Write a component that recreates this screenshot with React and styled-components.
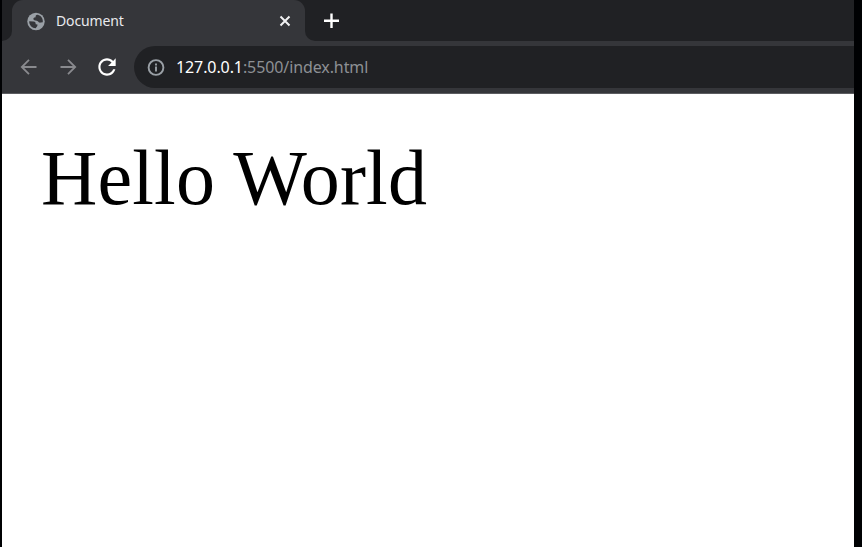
import React from "react";
import styled, { createGlobalStyle } from "styled-components";

const GlobalStyle = createGlobalStyle`
  * { box-sizing: border-box; }
  body { margin: 0; background: #000; overflow: hidden; }
`;

const Screen = styled.div`
  height: 547px;
  padding: 0 8px 0 2px;
  background: #000103;
`;

const BrowserWindow = styled.div`
  height: 100%;
  display: flex;
  flex-direction: column;
  background: #fff;
  font-family: "Open Sans", "Noto Sans", sans-serif;
`;

const TabStrip = styled.div`
  height: 42px;
  flex: none;
  display: flex;
  background: #35363a;
`;

const StripStart = styled.div`
  width: 10px;
  height: 41px;
  background: #202124;
  border-bottom-right-radius: 10px;
`;

const TabSlot = styled.div`
  width: 293px;
  background: linear-gradient(#202124 20px, #35363a 20px);
`;

const Tab = styled.div`
  height: 42px;
  display: flex;
  align-items: center;
  padding: 0 13px 1px 14px;
  background: #35363a;
  border-radius: 11px 11px 0 0;
`;

const TabTitle = styled.span`
  flex: 1;
  margin-left: 10px;
  color: #e9eaed;
  font-family: "Noto Sans", sans-serif;
  font-size: 14px;
  line-height: 20px;
  letter-spacing: -0.14px;
`;

const StripRest = styled.div`
  flex: 1;
  height: 41px;
  padding: 13px 0 0 18px;
  background: #202124;
  border-bottom-left-radius: 10px;
`;

const Toolbar = styled.div`
  height: 52px;
  flex: none;
  display: flex;
  align-items: flex-start;
  padding-top: 4px;
  background: #35363a;
  border-bottom: 1px solid #5b5c60;
`;

const NavButtons = styled.div`
  width: 132px;
  height: 42px;
  display: flex;
  align-items: center;
  gap: 19px;
  padding-left: 17px;
`;

const AddressBar = styled.div`
  flex: 1;
  height: 42px;
  display: flex;
  align-items: center;
  gap: 10px;
  padding-left: 12px;
  background: #202124;
  border-radius: 21px 0 0 21px;
`;

const Url = styled.span`
  color: #8d9094;
  font-family: "Noto Sans", sans-serif;
  font-size: 16px;
  line-height: 22px;
  letter-spacing: -0.1px;
`;

const Host = styled.span`
  color: #fff;
`;

const Icon = styled.svg`
  display: block;
  flex: none;
  fill: none;
  stroke: ${(p) => p.$color};
  stroke-width: ${(p) => p.$weight || 2};
`;

const ReloadGlyph = styled(Icon)`
  margin-left: -3px;
`;

const Page = styled.main`
  flex: 1;
  padding: 39px 0 0 39px;
`;

const Heading = styled.h1`
  margin: 0;
  color: #000;
  font: 400 78px/90px "Liberation Serif", "Times New Roman", serif;
  letter-spacing: 0.15px;
`;

const GlobeIcon = () => (
  <Icon width="20" height="20" viewBox="0 0 20 20" $color="none">
    <circle cx="10" cy="10.500" r="8.700" fill="#9aa0a6" />
    <path
      fill="#35363a"
      d="M11.600 3.800C9.500 4 9.300 5.500 9.800 6.300C8 6.100 7 7.300 7.500 8.500C8.300 9.900 10.600 9.100 11.800 10.300C12.700 11.200 13.200 11.900 14.800 11.600L16.800 11.200C17.200 7.700 15.200 4.600 11.600 3.800Z"
    />
    <path
      fill="#35363a"
      d="M3.200 10.300L7.600 10.600C9.200 10.800 9.800 11.800 9.700 13.200L11.500 13.500C11.700 15.300 10.600 15.600 9.700 17.300C6 17.200 3.100 14.100 3.200 10.300Z"
    />
  </Icon>
);

const CloseIcon = () => (
  <Icon width="14" height="14" viewBox="0 0 14 14" $color="#f1f1f3">
    <path d="M2.500 2.500l9 9M11.500 2.500l-9 9" />
  </Icon>
);

const PlusIcon = () => (
  <Icon width="16" height="16" viewBox="0 0 16 16" $color="#fff" $weight={2.4}>
    <path d="M8.500 .5v14.500M1 7.800h15" />
  </Icon>
);

const BackIcon = () => (
  <Icon width="20" height="20" viewBox="0 0 20 20" $color="#898a8e" $weight={1.8}>
    <path d="M17.500 10H3M10 2.800L2.800 10l7.200 7.200" />
  </Icon>
);

const ForwardIcon = () => (
  <Icon width="20" height="20" viewBox="0 0 20 20" $color="#898a8e" $weight={1.8}>
    <path d="M2.500 10H17M10 2.800l7.200 7.200-7.200 7.200" />
  </Icon>
);

const ReloadIcon = () => (
  <ReloadGlyph width="26" height="26" viewBox="0 0 24 24" $color="none">
    <path
      fill="#fff"
      d="M17.650 6.350C16.200 4.900 14.210 4 12 4c-4.420 0-7.990 3.580-7.990 8s3.570 8 7.990 8c3.730 0 6.840-2.550 7.730-6h-2.080c-.820 2.330-3.040 4-5.650 4-3.310 0-6-2.690-6-6s2.690-6 6-6c1.660 0 3.140.690 4.220 1.780L13 11h7V4l-2.350 2.350z"
    />
  </ReloadGlyph>
);

const InfoIcon = () => (
  <Icon width="20" height="20" viewBox="0 0 20 20" $color="#9aa0a6" $weight={1.9}>
    <circle cx="10" cy="10.500" r="7.400" />
    <path d="M10 9.500v5M10 6.500v1.900" />
  </Icon>
);

export default function App() {
  return (
    <Screen>
      <GlobalStyle />
      <BrowserWindow>
        <TabStrip>
          <StripStart />
          <TabSlot>
            <Tab>
              <GlobeIcon />
              <TabTitle>Document</TabTitle>
              <CloseIcon />
            </Tab>
          </TabSlot>
          <StripRest>
            <PlusIcon />
          </StripRest>
        </TabStrip>
        <Toolbar>
          <NavButtons>
            <BackIcon />
            <ForwardIcon />
            <ReloadIcon />
          </NavButtons>
          <AddressBar>
            <InfoIcon />
            <Url>
              <Host>127.0.0.1</Host>:5500/index.html
            </Url>
          </AddressBar>
        </Toolbar>
        <Page>
          <Heading>Hello World</Heading>
        </Page>
      </BrowserWindow>
    </Screen>
  );
}
